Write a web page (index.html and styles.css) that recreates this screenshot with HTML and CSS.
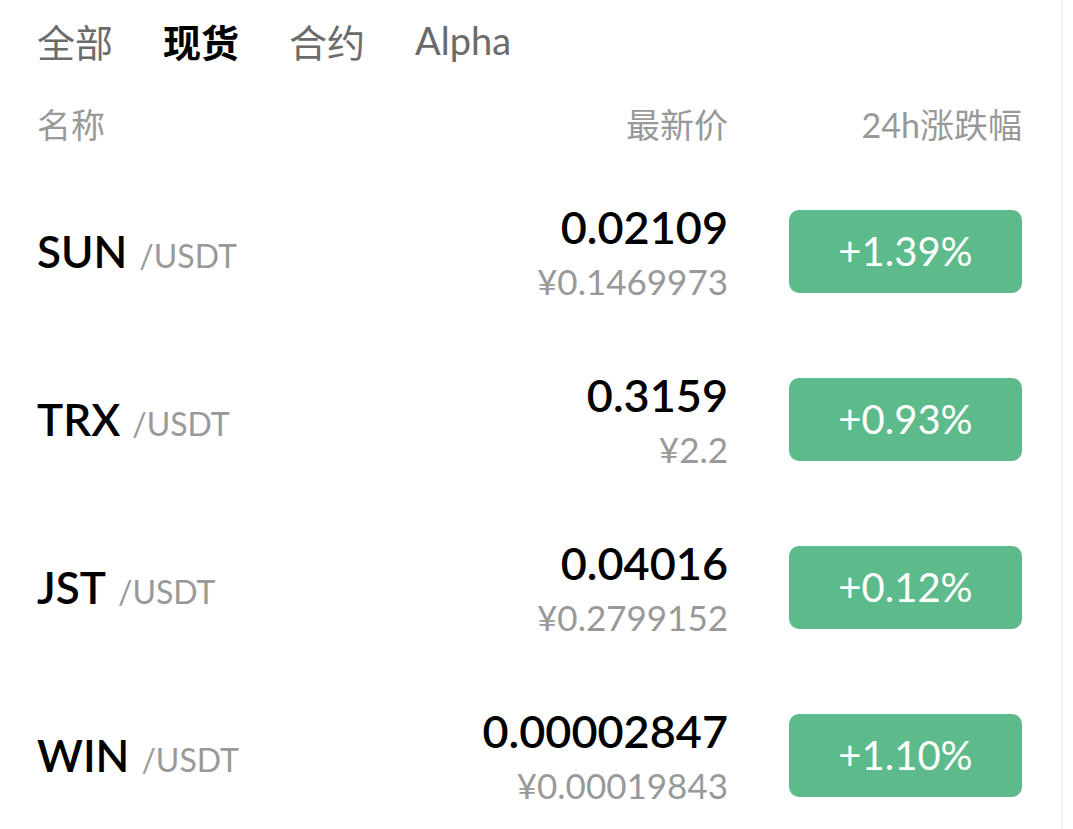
FILE: index.html
```html
<!DOCTYPE html>
<html lang="zh-CN">
<head>
    <meta charset="UTF-8">
    <meta name="viewport" content="width=device-width, initial-scale=1.0">
    <title>现货行情</title>
    <link rel="stylesheet" href="styles.css">
</head>
<body>
    <div class="page">
        <div class="tabs">
            <span class="tab">全部</span>
            <span class="tab active">现货</span>
            <span class="tab">合约</span>
            <span class="tab">Alpha</span>
        </div>

        <div class="head">
            <span class="col-name">名称</span>
            <span class="col-price">最新价</span>
            <span class="col-change">24h涨跌幅</span>
        </div>

        <div class="row">
            <div class="col-name"><span class="sym">SUN</span><span class="quote">/USDT</span></div>
            <div class="col-price">
                <div class="last">0.02109</div>
                <div class="cny">¥0.1469973</div>
            </div>
            <div class="col-change"><span class="badge">+1.39%</span></div>
        </div>

        <div class="row">
            <div class="col-name"><span class="sym">TRX</span><span class="quote">/USDT</span></div>
            <div class="col-price">
                <div class="last">0.3159</div>
                <div class="cny">¥2.2</div>
            </div>
            <div class="col-change"><span class="badge">+0.93%</span></div>
        </div>

        <div class="row">
            <div class="col-name"><span class="sym">JST</span><span class="quote">/USDT</span></div>
            <div class="col-price">
                <div class="last">0.04016</div>
                <div class="cny">¥0.2799152</div>
            </div>
            <div class="col-change"><span class="badge">+0.12%</span></div>
        </div>

        <div class="row">
            <div class="col-name"><span class="sym">WIN</span><span class="quote">/USDT</span></div>
            <div class="col-price">
                <div class="last">0.00002847</div>
                <div class="cny">¥0.00019843</div>
            </div>
            <div class="col-change"><span class="badge">+1.10%</span></div>
        </div>
    </div>
</body>
</html>
```

FILE: styles.css
```css
body {
    margin: 0;
    background: #fff;
    font-family: Lato, "Noto Sans CJK SC", sans-serif;
    color: #000;
}
.page {
    width: 1063px;
    height: 829px;
    box-sizing: border-box;
    padding: 0 39px 0 37px;
    border-right: 2px solid #f2f2f2;
    overflow: hidden;
}
.tabs {
    display: flex;
    gap: 50px;
    height: 80px;
    align-items: center;
}
.tab {
    font-size: 38px;
    color: #6b6b6b;
}
.tab.active {
    color: #000;
    font-weight: bold;
}
.head {
    display: flex;
    align-items: center;
    height: 87px;
    font-size: 34px;
    color: #999;
}
.col-name {
    flex: 1;
    display: flex;
    align-items: baseline;
}
.col-price {
    text-align: right;
}
.col-change {
    width: 294px;
    text-align: right;
}
.row {
    display: flex;
    align-items: center;
    height: 168px;
}
.sym {
    font-size: 44px;
    font-weight: 600;
}
.quote {
    font-size: 32px;
    color: #999;
    margin-left: 12px;
}
.last {
    font-size: 45px;
    font-weight: 600;
    line-height: 52px;
}
.cny {
    font-size: 35px;
    color: #999;
    line-height: 42px;
    margin-top: 7px;
}
.badge {
    display: inline-block;
    width: 233px;
    height: 83px;
    line-height: 83px;
    text-align: center;
    background: #5dba8a;
    color: #fff;
    font-size: 40px;
    border-radius: 10px;
}
```
